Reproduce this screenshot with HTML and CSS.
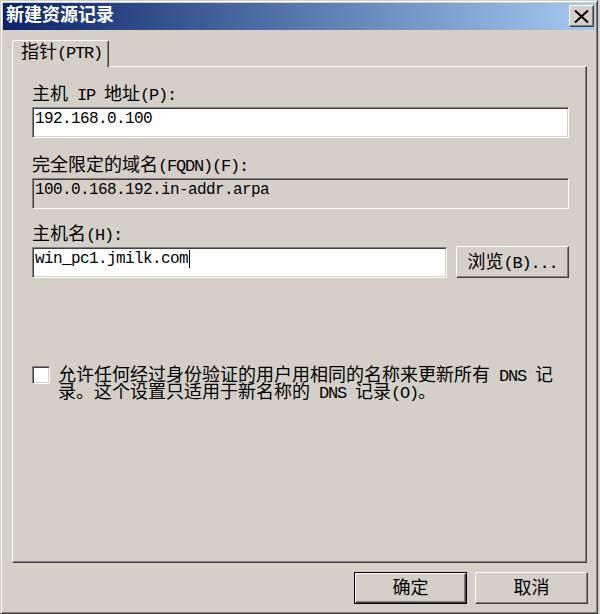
FILE: index.html
```html
<!DOCTYPE html>
<html lang="zh-CN">
    <head>
        <meta charset="UTF-8">
        <meta name="viewport" content="width=device-width, initial-scale=1.0">
        <link rel="stylesheet" href="styles.css">
        <title>新建资源记录</title>
    </head>
    <body>
        <div class="window">
            <div class="titlebar">
                <span class="title">新建资源记录</span>
                <button class="close-btn" type="button">
                    <svg width="15" height="13" viewBox="0 0 15 13">
                        <path d="M1 0.5 L14 12.5 M14 0.5 L1 12.5" stroke="#000" stroke-width="2" fill="none"/>
                    </svg>
                </button>
            </div>

            <div class="client">
                <div class="tabs">
                    <div class="tab">指针<span class="en">(PTR)</span></div>
                </div>

                <div class="panel">
                    <div class="label">主机<span class="en"> IP </span>地址<span class="en">(P):</span></div>
                    <div class="field">192.168.0.100</div>

                    <div class="label second">完全限定的域名<span class="en">(FQDN)(F):</span></div>
                    <div class="field readonly">100.0.168.192.in-addr.arpa</div>

                    <div class="label third">主机名<span class="en">(H):</span></div>
                    <div class="host-row">
                        <div class="field host">win_pc1.jmilk.com<span class="caret"></span></div>
                        <button class="btn browse" type="button">浏览<span class="en">(B)...</span></button>
                    </div>

                    <div class="check-row">
                        <div class="checkbox"></div>
                        <div class="check-text">允许任何经过身份验证的用户用相同的名称来更新所有<span class="en"> DNS </span>记<br>录。这个设置只适用于新名称的<span class="en"> DNS </span>记录<span class="en">(O)</span>。</div>
                    </div>
                </div>

                <div class="footer">
                    <button class="btn default" type="button">确定</button>
                    <button class="btn" type="button">取消</button>
                </div>
            </div>
        </div>
    </body>
</html>
```

FILE: styles.css
```css
body {
    margin: 0;
    background-color: #d4d0c8;
    font-family: "Noto Sans CJK SC", sans-serif;
    font-size: 18px;
    color: #000;
}

/* half-width latin runs, like the old song typeface */
.en {
    font-family: "Liberation Mono", monospace;
    font-size: 17px;
    letter-spacing: -1.2px;
    /* keep the mono run from growing the line box */
    line-height: 0;
}

.window {
    width: 598px;
    height: 614px;
    box-sizing: border-box;
    border: 1px solid;
    border-color: #d4d0c8 #404040 #404040 #d4d0c8;
    box-shadow: inset 1px 1px #fff, inset -1px -1px #808080;
    padding: 2px;
    display: flex;
    flex-direction: column;
}

.titlebar {
    height: 27px;
    flex-shrink: 0;
    background: linear-gradient(to right, #0a246a, #a6caf0);
    display: flex;
    justify-content: space-between;
    align-items: flex-start;
    padding: 0 1px 0 3px;
}

.title {
    color: #fff;
    font-weight: bold;
    line-height: 20px;
}

.close-btn {
    width: 25px;
    height: 22px;
    margin-top: 2px;
    padding: 0;
    box-sizing: border-box;
    background-color: #d4d0c8;
    border: 1px solid;
    border-color: #fff #404040 #404040 #fff;
    box-shadow: inset -1px -1px #808080;
    display: flex;
    align-items: center;
    justify-content: center;
}

.client {
    flex: 1;
    padding: 10px 7px 0 9px;
    display: flex;
    flex-direction: column;
}

.tabs {
    display: flex;
    position: relative;
    z-index: 1;
    margin-bottom: -1px;
}

.tab {
    width: 97px;
    height: 27px;
    box-sizing: border-box;
    background-color: #d4d0c8;
    border-left: 1px solid #fff;
    border-top: 1px solid #fff;
    border-right: 1px solid #404040;
    border-radius: 2px 2px 0 0;
    box-shadow: inset -1px 0 #808080;
    padding-left: 8px;
    line-height: 19px;
}

.panel {
    width: 575px;
    height: 497px;
    box-sizing: border-box;
    border: 1px solid;
    border-color: #fff #404040 #404040 #fff;
    box-shadow: inset -1px -1px #808080;
    padding: 15px 17px 0 19px;
}

.label {
    line-height: 20px;
    margin-bottom: 5px;
}

.label.second {
    margin-top: 15px;
}

.label.third {
    margin-top: 13px;
    margin-bottom: 4px;
}

.field {
    height: 31px;
    box-sizing: border-box;
    background-color: #fff;
    border: 1px solid;
    border-color: #808080 #fff #fff #808080;
    box-shadow: inset 1px 1px #404040, inset -1px -1px #d4d0c8;
    padding: 2px 2px;
    font-family: "Liberation Mono", monospace;
    font-size: 16px;
    letter-spacing: -0.6px;
    line-height: 18px;
    white-space: nowrap;
}

.field.readonly {
    background-color: #d4d0c8;
}

.host-row {
    display: flex;
    align-items: flex-end;
    gap: 9px;
}

.field.host {
    flex: 1;
}

.caret {
    display: inline-block;
    width: 1px;
    height: 18px;
    margin-left: 1px;
    background-color: #000;
    vertical-align: top;
}

.btn {
    width: 113px;
    height: 32px;
    box-sizing: border-box;
    padding: 0 0 4px;
    background-color: #d4d0c8;
    border: 1px solid;
    border-color: #fff #404040 #404040 #fff;
    box-shadow: inset -1px -1px #808080;
    font: inherit;
    color: #000;
    line-height: 20px;
    text-align: center;
}

.btn.default {
    border-color: #000;
    box-shadow: inset 1px 1px #fff, inset -1px -1px #404040, inset -2px -2px #808080;
}

.check-row {
    display: flex;
    align-items: flex-start;
    margin-top: 86px;
}

.checkbox {
    width: 18px;
    height: 18px;
    margin-top: 2px;
    box-sizing: border-box;
    flex-shrink: 0;
    background-color: #fff;
    border: 1px solid;
    border-color: #808080 #fff #fff #808080;
    box-shadow: inset 1px 1px #404040, inset -1px -1px #d4d0c8;
}

.check-text {
    margin-left: 8px;
    padding-top: 1px;
    line-height: 17px;
    white-space: nowrap;
}

.footer {
    display: flex;
    justify-content: flex-end;
    gap: 8px;
    margin-top: 9px;
}
```
